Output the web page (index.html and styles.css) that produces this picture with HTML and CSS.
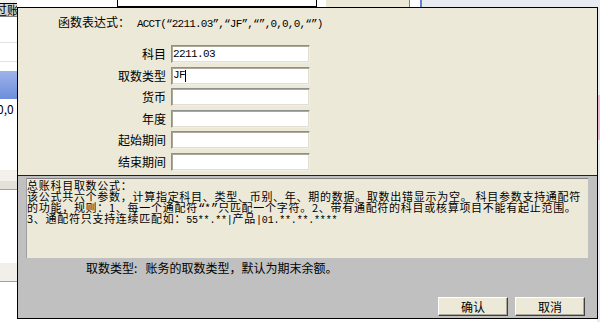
FILE: index.html
```html
<!DOCTYPE html>
<html lang="zh">
<head>
<meta charset="utf-8">
<title>ACCT</title>
<link rel="stylesheet" href="styles.css">
</head>
<body>
<div class="desk">
  <div class="leftgrid">
    <div class="lg-top"></div>
    <div class="lg-head"><span>过账</span></div>
    <div class="lg-row h26"></div>
    <div class="lg-row h20"></div>
    <div class="lg-row h9 noline"></div>
    <div class="lg-sel"></div>
    <div class="lg-row h72 noline"><span class="lg-txt">0,0</span></div>
    <div class="lg-band"></div>
    <div class="lg-row h73 noline"></div>
    <div class="lg-band2"></div>
    <div class="lg-row h27 noline"></div>
  </div>
  <div class="main">
    <div class="topstrip">
      <div class="ts-a"></div>
      <div class="ts-box"></div>
      <div class="ts-btn"></div>
      <div class="ts-gap"></div>
      <div class="ts-rest"></div>
    </div>
    <div class="main-body">
      <div class="hidden-area"></div>
      <div class="rightstrip">
        <div class="rs-a"></div>
        <div class="rs-pink"></div>
        <div class="rs-b"></div>
      </div>
    </div>
  </div>
</div>

<div class="dialog">
  <div class="upper">
    <div class="expr"><span class="cn">函数表达式：</span><span class="lat expr-val">ACCT(“2211.03”,“JF”,“”,0,0,0,“”)</span></div>
    <div class="form">
      <label class="lbl">科目</label><div class="field"><span class="lat">2211.03</span></div>
      <label class="lbl">取数类型</label><div class="field"><span class="lat">JF</span><span class="caret"></span></div>
      <label class="lbl">货币</label><div class="field"></div>
      <label class="lbl">年度</label><div class="field"></div>
      <label class="lbl">起始期间</label><div class="field"></div>
      <label class="lbl">结束期间</label><div class="field"></div>
    </div>
  </div>
  <div class="lower">
    <div class="memo">
      <p>总账科目取数公式：</p>
      <p>该公式共六个参数，计算指定科目、类型、币别、年、期的数据。取数出错显示为空。 科目参数支持通配符</p>
      <p>的功能，规则：1、每一个通配符<span class="q">“</span>*<span class="q">”</span>只匹配一个字符。2、带有通配符的科目或核算项目不能有起止范围。</p>
      <p>3、通配符只支持连续匹配如：<span class="lat">55**.**|</span>产品<span class="lat">|01.**.**.****</span></p>
    </div>
    <div class="hint">取数类型:&nbsp;&nbsp;&nbsp;账务的取数类型，默认为期末余额。</div>
    <div class="buttons">
      <button class="btn">确认</button>
      <button class="btn">取消</button>
    </div>
  </div>
</div>
</body>
</html>
```
FILE: styles.css
```css
* { box-sizing: border-box; margin: 0; padding: 0; }
html, body { width: 600px; height: 322px; overflow: hidden; }
body {
  position: relative;
  background: #fff;
  font-family: "Noto Sans CJK SC", "Noto Sans", sans-serif;
  font-size: 12px;
  color: #000;
}
.lat { font-family: "Liberation Mono", monospace; font-size: 11px; letter-spacing: -0.6px; }
.q { font-family: "Liberation Mono", monospace; font-size: 12px; letter-spacing: 0; }

/* background application */
.desk { display: flex; height: 322px; }
.leftgrid { width: 17px; display: flex; flex-direction: column; overflow: hidden; background: #fff; }
.lg-top { height: 4px; background: #F4F3EE; border-bottom: 1px solid #000; }
.lg-head {
  height: 13px; background: #D6D3CE; border-bottom: 1px solid #808080;
  overflow: hidden; white-space: nowrap; line-height: 12px;
}
.lg-head span { display: block; margin-left: -5px; }
.lg-row { border-bottom: 1px solid #E3E3E3; background: #fff; }
.lg-row.noline { border-bottom: none; }
.h26 { height: 26px; }
.h20 { height: 20px; }
.h9 { height: 9px; }
.h72 { height: 72px; }
.h73 { height: 73px; }
.h27 { height: 40px; }
.lg-txt { display: block; margin-left: -3px; margin-top: 3px; line-height: 14px; white-space: nowrap; }
.lg-sel { height: 28px; background: linear-gradient(#9DB3EA, #6D8DDB); }
.lg-band { height: 20px; background: linear-gradient(#F2F1EC 0 60%, #E4E2D8 60%); border-bottom: 1px solid #A0A0A0; }
.lg-band2 { height: 20px; background: #F0EFEA; border-bottom: 1px solid #A0A0A0; }

.main { flex: 1; display: flex; flex-direction: column; }
.topstrip { height: 7px; display: flex; }
.ts-a { width: 100px; background: #fff; }
.ts-box { width: 200px; border: 1px solid #000; border-top: none; background: #fff; }
.ts-btn { width: 85px; margin-left: 8px; background: #ECE9D8; border-left: 1px solid #fff; border-right: 1px solid #808080; }
.ts-gap { width: 12px; background: #fff; border-right: 2px solid #6B7FD0; }
.ts-rest { flex: 1; background: #E8EBF2; }
.main-body { flex: 1; display: flex; }
.hidden-area { flex: 1; background: #fff; }
.rightstrip { width: 3px; display: flex; flex-direction: column; background: #E8EBF2; }
.rs-a { height: 88px; }
.rs-pink { height: 45px; background: #E9B8D8; }
.rs-b { flex: 1; }

/* dialog */
.dialog {
  position: absolute; left: 17px; top: 7px;
  width: 581px; height: 312px;
  border: 1px solid #000;
  background: #C0C0C0;
  display: flex; flex-direction: column;
}
.upper { height: 167px; background: #ECE9D8; padding: 7px 0 0 40px; }
.expr { line-height: 14px; white-space: nowrap; }
.expr-val { margin-left: 7px; letter-spacing: -0.8px; }

.form {
  margin: 14px 0 0 42px;
  display: grid;
  grid-template-columns: 66px 139px;
  grid-auto-rows: 18px;
  column-gap: 5px;
  row-gap: 3.5px;
}
.lbl { text-align: right; line-height: 18px; }
.field {
  height: 18px; background: #fff;
  border: 1px solid; border-color: #8E8F8F #F1EFE2 #F1EFE2 #8E8F8F;
  box-shadow: inset 1px 1px #ACA899, inset -1px -1px #E2DFD2;
  padding-left: 1px; line-height: 15px; display: flex; align-items: center;
}
.caret { width: 1px; height: 12px; background: #000; }

.lower { flex: 1; border-top: 1px solid #202020; display: flex; flex-direction: column; }
.memo {
  margin: 2px 9px 0 8px; height: 80px;
  background: #ECE9D8;
  border-top: 1px solid #808080; border-left: 1px solid #A0A0A0;
  font-size: 11px; line-height: 11px; white-space: nowrap; overflow: hidden;
  letter-spacing: 0.72px; padding-top: 1px;
}
.memo p { height: 11px; }
.memo .lat { font-size: 10px; letter-spacing: -0.2px; }
.hint { margin: 3px 0 0 68px; line-height: 14px; white-space: nowrap; }
.buttons { margin: 22px 12px 0 0; display: flex; justify-content: flex-end; gap: 7px; }
.btn {
  width: 70px; height: 19px;
  font: inherit; font-size: 12px; line-height: 16px;
  background: #ECE9D8;
  border: 1px solid; border-color: #fff #404040 #404040 #fff;
  box-shadow: inset -1px -1px #ACA899;
  color: #000;
}
```
